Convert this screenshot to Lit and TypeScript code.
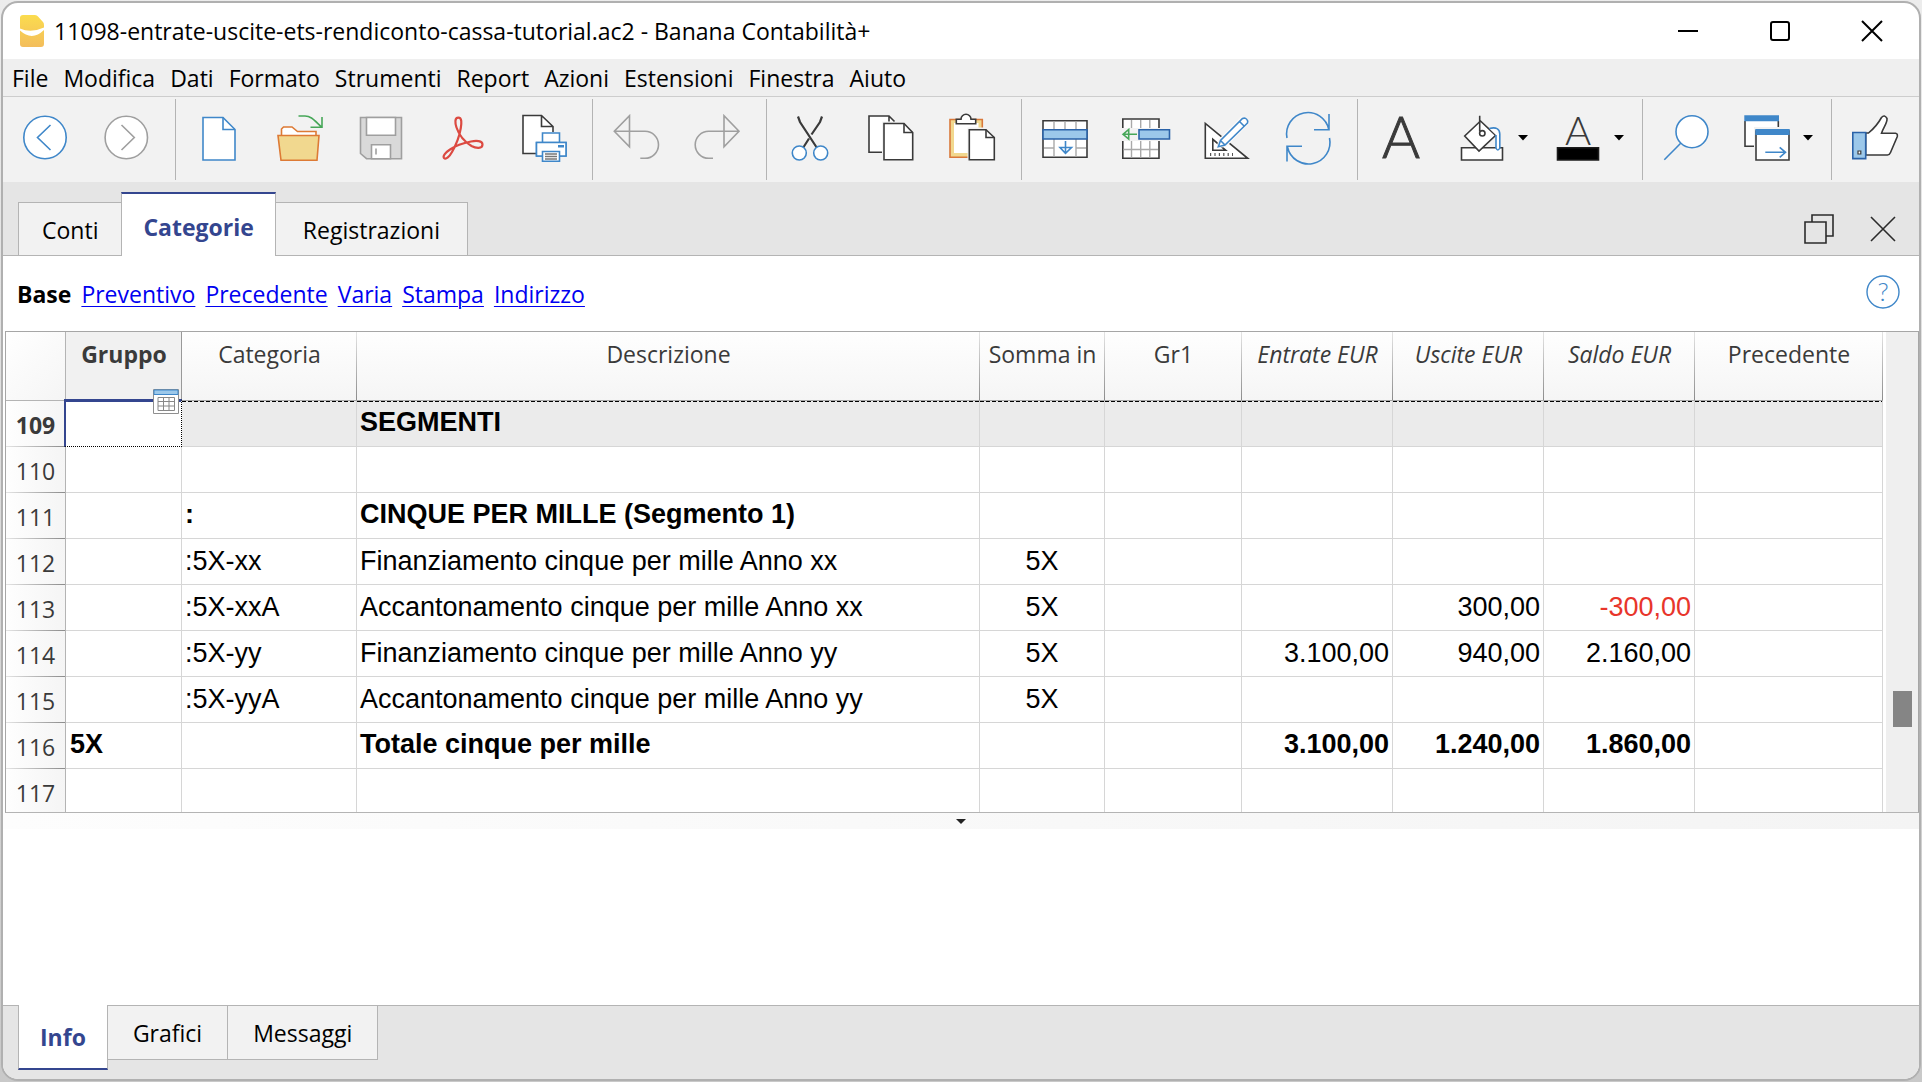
import { LitElement, html, svg, css, nothing, TemplateResult } from "lit";
import { customElement, property, state } from "lit/decorators.js";
import { classMap } from "lit/directives/class-map.js";

const BLUE = "#3f87c9";
const DEEP = "#2a62a8";
const SKY = "#9cc8ea";
const INK = "#3a3a3a";
const GREY = "#9f9f9f";
const GREEN = "#46a758";

const icons: Record<string, TemplateResult> = {
  back: svg`<circle cx="24" cy="23.5" r="21.2" fill="#fff" stroke=${BLUE}/>
    <path d="M29.5 11 16.5 23.5 29.5 36" stroke=${BLUE}/>`,
  forward: svg`<circle cx="24.3" cy="23.5" r="21.2" fill="#fff" stroke=${GREY}/>
    <path d="M19.5 11 32.3 23.5 19.5 36" stroke=${GREY}/>`,
  newFile: svg`<path d="M8 3.5H28L40 15.5V46H8Z" fill="#fff" stroke=${BLUE}/>
    <path d="M28 3.5V15.5H40" stroke=${BLUE}/>`,
  open: svg`<path d="M5.5 22V15L7.5 13H16L21.5 17.5H40V22" fill="#fff" stroke="#dd7a35"/>
    <path d="M2 21.5H43L41 46.3H5Z" fill="#f1d88f" stroke="#dd7a35"/>
    <path d="M22.5 2H29C35 2 38 6 45.5 13M34.5 13.2H46V3" stroke=${GREEN}/>`,
  save: svg`<path d="M3.5 3.5H44.5V44.7H9.5L3.5 39.5Z" fill="#d9d9d9" stroke=${GREY}/>
    <path d="M9.5 3.5H38.5V21.3H9.5ZM14.5 44.7V30.7H33.5V44.7Z" fill="#fff" stroke=${GREY}/>
    <path d="M19 34.5V40.5" stroke=${GREY}/>`,
  pdf: svg`<path d="M20.4 3.7C16.5 3.7 17 9 18.500 13.500C21 21 27 28 33.500 32C38 34.500 44.500 35 44.500 30.500C44.500 26.500 38 26.500 33 27.500C25 29 17 32 12 35.500C7.500 38.500 4.500 42 6 44C8 46 11.500 42.500 14 38C18 31 21.500 22 22.800 14C23.600 9 24 3.700 20.400 3.700Z" stroke="#dc4a41" stroke-width="2.2"/>`,
  print: svg`<path d="M4 1.5H22.500L34 12.500V28H22V39.500H4Z" fill="#fff"/>
    <path d="M34 18V12.500L22.500 1.500H4V39.500H17M22.500 1.500V12.500H34" stroke=${INK}/>
    <path d="M23.500 28.500V19H40.500V28.500M23.500 42H17.500V28.500H47V42H40.500" fill="#fff" stroke=${BLUE}/>
    <path d="M17.500 28.500H47V42H17.500Z" fill="#fff" stroke=${BLUE}/>
    <path d="M39 31H45V33.500H39Z" fill=${BLUE}/>
    <path d="M23.500 37.500H40.500V47.300H23.500Z" fill="#fff" stroke=${BLUE}/>
    <path d="M26 40H38M26 42.500H38M26 45H38" stroke="#777"/>`,
  undo: svg`<path d="M17.500 1.800V32.800L2.300 17.300ZM2.300 17.300H33A13.500 13.500 0 0 1 33 44.300H28.300" stroke=${GREY}/>`,
  redo: svg`<path d="M31 1.800V32.800L46 17.300ZM46 17.300H15.700A13.500 13.500 0 0 0 15.700 44.300H20" stroke=${GREY}/>`,
  cut: svg`<path d="M12 2.500 14 8 30.700 33.500M36 2.500 34 8 25.500 20.500M23 24.500 17.300 33.500" stroke=${INK} stroke-width="2.200"/>
    <circle cx="13.300" cy="39" r="7" fill="#fff" stroke=${BLUE}/>
    <circle cx="34.700" cy="39" r="7" fill="#fff" stroke=${BLUE}/>`,
  copy: svg`<path d="M2 2H22L27 7.500H15V38.300H2Z" fill="#fff"/>
    <path d="M15 38.300H2V2H22L27.500 7.500M22 2V7.500" stroke=${INK}/>
    <path d="M17 9.500H37L45.700 18.500V45.700H17Z" fill="#fff" stroke=${INK}/>
    <path d="M37 9.500V18.500H45.700" stroke=${INK}/>`,
  paste: svg`<path d="M2 5.500H34.300V43.300H2Z" fill="#f1d88f" stroke="#d9783a"/>
    <path d="M6 9H30.500V39H6Z" fill="#fff"/>
    <path d="M19.500 13.500H48V47H19.500Z" fill="#f2f2f2"/>
    <path d="M8.300 9.700V5.300H13A5 5 0 0 1 23 5.300H27.700V9.700Z" fill="#fff" stroke=${INK}/>
    <path d="M21.300 15.700H38L46.300 23.500V45.700H21.300Z" fill="#fff" stroke=${INK}/>
    <path d="M38 15.700V23.500H46.300" stroke=${INK}/>`,
  insertRows: svg`<path d="M2 6.700H46V43.300H2Z" fill="#fff" stroke=${INK}/>
    <path d="M13 7.500V15M24 7.500V15M35 7.500V15M13 25V42.500M35 25V42.500M3 34H13M35 34H45" stroke="#a9a9a9" stroke-width="1.400"/>
    <path d="M2 15.700H46V25H2Z" fill=${SKY} stroke=${DEEP}/>
    <path d="M24.500 27V33.500M19 33.500H30.500L24.500 39.300ZM24.500 33V38.500" stroke=${BLUE}/>`,
  addColumns: svg`<path d="M.800 5H37V44.300H.800Z" fill="#fff" stroke=${INK}/>
    <path d="M9.500 6V14M18.700 6V14M27.800 6V14M9.500 27V43.500M18.700 27V43.500M27.800 27V43.500M1.500 35.500H36" stroke="#a9a9a9" stroke-width="1.400"/>
    <path d="M-1 14H39V27H-1Z" fill="#f2f2f2"/>
    <path d="M17 15.700H47.500V25H17Z" fill=${SKY} stroke=${DEEP}/>
    <path d="M1 20.300 6.700 15.500V25ZM1 20.300H15" stroke=${GREEN}/>`,
  design: svg`<path d="M2.300 9.500V44.300H44.700Z" fill="#fff" stroke=${INK}/>
    <path d="M9.800 25.300V36.300H22.700Z" stroke=${INK}/>
    <path d="M7 40.500H30" stroke="#555" stroke-width="3" stroke-dasharray="1.200 3.200"/>
    <path d="M13.500 34 15.500 25.500 39 1.500 47 9 23 33Z" fill="#f7f7f7"/>
    <path d="M15.300 32.700 17.500 26.500 39.500 4.500Q43 3 44.700 7L44.500 9 22 31ZM17.500 26.500 22 31M36.500 7.500 41.300 12.200" fill="#fff" stroke=${BLUE}/>`,
  refresh: svg`<path d="M3 24A21.300 21.300 0 0 1 44.800 15.700M45 0V15.700H30M45.500 24A21.300 21.300 0 0 1 3.500 33M3 47.500V32.300H18" stroke=${BLUE}/>`,
  font: svg`<text class="letter regular" x="24" y="44">A</text>`,
  fill: svg`<path d="M3.500 33.700H44.500V46H3.500Z" fill="#fff" stroke=${INK}/>
    <path d="M22.500 7 6.700 22 21 37 37.700 21.300Z" fill="#fff" stroke=${INK}/>
    <path d="M21.700 1.700V17.500" stroke=${INK}/>
    <circle cx="24.300" cy="19.300" r="2.700" fill="#fff" stroke=${INK}/>
    <path d="M31.300 14.500Q41.500 12 41.800 20V34Q39.800 38 38 34V21" stroke=${BLUE} fill="#fff"/>`,
  textColor: svg`<text class="letter thin" x="24" y="31">A</text>
    <path d="M3.500 33.700H44.500V46H3.500Z" fill="#000" stroke="#1c1c1c"/>`,
  search: svg`<circle cx="30" cy="17.700" r="16" fill="#fff" stroke=${BLUE}/>
    <path d="M18.700 29.300 2.300 45.700" stroke=${BLUE}/>`,
  windows: svg`<path d="M2 4H35.300V13H11V32.300H2Z" fill="#fff"/>
    <path d="M35.300 7V13M2 7V32.300H11" stroke=${INK}/>
    <path d="M1.300 1.300H36V7.300H1.300Z" fill=${BLUE}/>
    <path d="M13 17H46V46H13Z" fill="#fff" stroke=${INK}/>
    <path d="M12.300 15H46.700V21H12.300Z" fill=${BLUE}/>
    <path d="M22.300 38.300H42.500M36.700 33.300 42.500 38.300 36.700 43.300" stroke=${BLUE}/>`,
  like: svg`<path d="M14.700 19H17.500C23 14.500 27.500 9 30.500 3.500Q33.500 0 36 4.500C36.500 9 32.500 13 30.500 19.300H44.500Q46.800 19.500 46.300 22.500L39.500 38.500Q38.500 41 36.500 41H14.700Z" fill="#fff" stroke=${INK}/>
    <path d="M1.800 18.500H14.700V44.600H1.800Z" fill=${SKY} stroke=${DEEP}/>
    <path d="M7 37H9.800V40H7Z" fill="#fff" stroke=${INK} stroke-width="1.200"/>`,
};

interface Tool { icon: string; label: string; menu?: boolean; }

const toolGroups: Tool[][] = [
  [{ icon: "back", label: "Indietro" }, { icon: "forward", label: "Avanti" }],
  [
    { icon: "newFile", label: "Nuovo" },
    { icon: "open", label: "Apri" },
    { icon: "save", label: "Salva" },
    { icon: "pdf", label: "Crea PDF" },
    { icon: "print", label: "Stampa" },
  ],
  [{ icon: "undo", label: "Annulla" }, { icon: "redo", label: "Ripristina" }],
  [
    { icon: "cut", label: "Taglia" },
    { icon: "copy", label: "Copia" },
    { icon: "paste", label: "Incolla" },
  ],
  [
    { icon: "insertRows", label: "Inserisci righe" },
    { icon: "addColumns", label: "Aggiungi righe" },
    { icon: "design", label: "Imposta colonne" },
    { icon: "refresh", label: "Ricalcola" },
  ],
  [
    { icon: "font", label: "Carattere" },
    { icon: "fill", label: "Colore sfondo", menu: true },
    { icon: "textColor", label: "Colore testo", menu: true },
  ],
  [
    { icon: "search", label: "Cerca" },
    { icon: "windows", label: "Finestre", menu: true },
  ],
  [{ icon: "like", label: "Valuta" }],
];

interface Row {
  n: number; group?: string; cat?: string; desc?: string; sum?: string;
  inc?: string; out?: string; bal?: string; bold?: boolean;
}

const rows: Row[] = [
  { n: 109, desc: "SEGMENTI", bold: true },
  { n: 110 },
  { n: 111, cat: ":", desc: "CINQUE PER MILLE (Segmento 1)", bold: true },
  { n: 112, cat: ":5X-xx", desc: "Finanziamento cinque per mille Anno xx", sum: "5X" },
  { n: 113, cat: ":5X-xxA", desc: "Accantonamento cinque per mille Anno xx", sum: "5X", out: "300,00", bal: "-300,00" },
  { n: 114, cat: ":5X-yy", desc: "Finanziamento cinque per mille Anno yy", sum: "5X", inc: "3.100,00", out: "940,00", bal: "2.160,00" },
  { n: 115, cat: ":5X-yyA", desc: "Accantonamento cinque per mille Anno yy", sum: "5X" },
  { n: 116, group: "5X", desc: "Totale cinque per mille", inc: "3.100,00", out: "1.240,00", bal: "1.860,00", bold: true },
  { n: 117 },
];

@customElement("tool-bar")
class ToolBar extends LitElement {
  static styles = css`
    :host { display: block; background: #f2f2f2; }
    .bar { display: flex; height: 85px; padding-left: 2px; box-sizing: border-box; }
    .group { display: flex; align-items: flex-start; padding-right: 8px; margin: 2px 0; }
    .group + .group { padding-left: 3px; border-left: 1px solid #b4b4b4; }
    button {
      display: flex; align-items: center; width: 81px; height: 78px;
      padding: 0 0 0 16px; border: 0; background: none; gap: 12px;
    }
    button.wide { width: 96px; }
    svg.icon {
      width: 48px; height: 48px; flex: none; overflow: visible;
      fill: none; stroke-width: 1.6;
    }
    .arrow { width: 10px; height: 6px; flex: none; }
    .letter { text-anchor: middle; fill: #3a3a3a; font-family: Lato, sans-serif; font-weight: 300; }
    .regular { font-size: 58px; stroke: #3a3a3a; stroke-width: 1; }
    .thin { font-size: 40px; }
  `;

  render() {
    return html`<div class="bar" role="toolbar" aria-label="Strumenti">
      ${toolGroups.map(group => html`<div class="group">
        ${group.map(t => html`<button class=${classMap({ wide: !!t.menu })} aria-label=${t.label}>
          <svg class="icon" viewBox="0 0 48 48" aria-hidden="true">${icons[t.icon]}</svg>
          ${t.menu ? html`<svg class="arrow" viewBox="0 0 10 6" aria-hidden="true"><path d="M0 0H10L5 5.500Z"/></svg>` : nothing}
        </button>`)}
      </div>`)}
    </div>`;
  }
}

@customElement("accounts-table")
class AccountsTable extends LitElement {
  static styles = css`
    :host { display: flex; border: 1px solid #a6a6a6; border-bottom-color: #b4b4b4; margin: 0 0 0 2px; background: #fff; }
    table { flex: 1; min-width: 0; border-collapse: separate; border-spacing: 0; table-layout: fixed; }
    .c-num { width: 60px; } .c-group { width: 116px; } .c-cat { width: 175px; }
    .c-sum { width: 125px; } .c-gr { width: 137px; } .c-money { width: 151px; } .c-prev { width: 188px; }
    th, td { box-sizing: border-box; padding: 0; overflow: hidden; white-space: nowrap; }
    thead th {
      height: 69px; padding-top: 6px; vertical-align: top;
      font: 400 23px/32px "Open Sans", "Noto Sans", sans-serif; color: #3a3a3a;
      border-bottom: 1px solid #a6a6a6;
      background:
        linear-gradient(#e4e4e4, #8c8c8c) right / 1px 100% no-repeat,
        linear-gradient(#fefefe, #f5f5f5);
    }
    thead th.current { background: linear-gradient(#999, #999) right / 1px 100% no-repeat, #f1f1f1; font-weight: 700; }
    thead td { background: linear-gradient(135deg, #fff, #f5f5f5); border-right: 1px solid #b4b4b4; border-bottom: 1px solid #b4b4b4; }
    thead th.calc { font-style: italic; }
    tbody td, tbody th { height: 46px; border-right: 1px solid #d6d6d6; }
    tbody td { border-bottom: 1px solid #d6d6d6; font: 400 27px/31px "Liberation Sans", Arial, sans-serif; color: #000; padding: 0 3px; }
    tbody th {
      font: 400 23px/32px "Open Sans", "Noto Sans", sans-serif; color: #3a3a3a; padding-top: 2px;
      border-right-color: #b4b4b4;
      background:
        linear-gradient(90deg, #e4e4e4, #8c8c8c) bottom / 100% 1px no-repeat,
        linear-gradient(90deg, #fefefe, #f5f5f5);
    }
    tr.selected th { font-weight: 700; background-color: #f1f1f1; }
    tr.selected td {
      background: repeating-linear-gradient(90deg, #000 0 4px, #ebebeb 4px 6px) top / 100% 1px no-repeat, #ebebeb;
    }
    tr.bold td { font-weight: 700; padding-bottom: 2px; }
    tbody tr:last-child td, tbody tr:last-child th { height: 43px; border-bottom: 0; }
    tbody tr:last-child th { padding-top: 4px; background: linear-gradient(90deg, #fefefe, #f5f5f5); }
    tbody td.group { padding-left: 4px; }
    td.center { text-align: center; }
    tbody td.num { text-align: right; }
    td.neg { color: #e8352b; }
    tbody td.active { position: relative; overflow: visible; padding: 0; background: #fff; }
    .editor {
      position: absolute; inset: -2px 0 0 -2px; box-sizing: border-box; width: 118px; height: 48px;
      border: 1px dotted #000; border-left: 2px solid #34468f; border-top: 3px solid #34468f;
      border-radius: 0; background: #fff; padding: 0 4px; font: inherit; outline: 0;
    }
    .picker { position: absolute; right: 2px; top: -12px; width: 26px; height: 25px; padding: 0; border: 0; background: none; display: flex; }
    .track { width: 32px; margin-left: 3px; background: #efefef; display: flex; flex-direction: column; align-items: center; }
    .before { flex: 359; } .after { flex: 85; }
    .thumb { width: 19px; height: 36px; background: #858585; }
  `;

  private cell(row: Row) {
    const money = (v?: string) =>
      html`<td class=${classMap({ num: true, neg: !!v && v.startsWith("-") })}>${v}</td>`;
    return html`
      ${row.n === 109
        ? html`<td class="active">
            <input class="editor" aria-label="Gruppo">
            <button class="picker" aria-label="Elenco">
              <svg width="26" height="25" viewBox="0 0 26 25" aria-hidden="true">
                <path d="M.500.500H25.500V24.500H.500Z" fill="#fff" stroke="#8f8f8f"/>
                <path d="M1 1H25V5.500H1Z" fill=${SKY} stroke=${BLUE}/>
                <path d="M5 8.500H21.500V21.500H5ZM5 12.500H21M5 17H21M10.500 8V21.500M16 8V21.500" fill="none" stroke="#888"/>
              </svg>
            </button>
          </td>`
        : html`<td class="group">${row.group}</td>`}
      <td>${row.cat}</td>
      <td>${row.desc}</td>
      <td class="center">${row.sum}</td>
      <td></td>
      ${money(row.inc)}${money(row.out)}${money(row.bal)}
      <td></td>`;
  }

  render() {
    return html`<table>
      <colgroup>
        <col class="c-num"><col class="c-group"><col class="c-cat"><col><col class="c-sum"><col class="c-gr">
        <col class="c-money"><col class="c-money"><col class="c-money"><col class="c-prev">
      </colgroup>
      <thead><tr>
        <td></td>
        <th class="current" scope="col">Gruppo</th>
        <th scope="col">Categoria</th>
        <th scope="col">Descrizione</th>
        <th scope="col">Somma in</th>
        <th scope="col">Gr1</th>
        <th class="calc" scope="col">Entrate EUR</th>
        <th class="calc" scope="col">Uscite EUR</th>
        <th class="calc" scope="col">Saldo EUR</th>
        <th scope="col">Precedente</th>
      </tr></thead>
      <tbody>
        ${rows.map(r => html`<tr class=${classMap({ selected: r.n === 109, bold: !!r.bold })}>
          <th scope="row">${r.n}</th>${this.cell(r)}
        </tr>`)}
      </tbody>
    </table>
    <div class="track"><div class="before"></div><div class="thumb"></div><div class="after"></div></div>`;
  }
}

@customElement("tab-strip")
class TabStrip extends LitElement {
  @property({ type: Array }) tabs: string[] = [];
  @property() selected = "";
  @property({ type: Boolean, reflect: true }) bottom = false;

  static styles = css`
    :host { display: flex; align-items: flex-end; }
    :host([bottom]) { align-items: flex-start; }
    button {
      box-sizing: border-box; height: 53px; padding: 1px 27px 0; margin: 0 0 0 -1px;
      border: 1px solid #b4b4b4; border-bottom: 0; background: #f2f2f2; color: #000;
      font: 400 23px/32px "Open Sans", "Noto Sans", sans-serif;
    }
    button:first-child { padding-left: 23px; padding-right: 23px; margin-left: 0; }
    button.on {
      height: 64px; padding: 4px 21px 0; margin-bottom: -1px; background: #fff; color: #34468f;
      font-weight: 700; border-top: 2px solid #34468f;
    }
    :host([bottom]) button { height: 54px; border: 1px solid #b4b4b4; border-top: 0; padding: 0 25px; }
    :host([bottom]) button.on { height: 65px; margin: -1px 0 0; padding: 0 21px; border-bottom: 2px solid #34468f; }
  `;

  render() {
    return this.tabs.map(t => html`<button role="tab" aria-selected=${t === this.selected}
      class=${classMap({ on: t === this.selected })}
      @click=${() => { this.selected = t; }}>${t}</button>`);
  }
}

@customElement("app-root")
class AppRoot extends LitElement {
  @state() private view = "Base";

  static styles = css`
    :host {
      display: block; box-sizing: border-box; height: 100vh; padding: 1px;
      background: linear-gradient(#ececec, #c9c9c9); color: #000;
      font: 400 23px/32px "Open Sans", "Noto Sans", sans-serif;
    }
    .window {
      display: flex; flex-direction: column; box-sizing: border-box; height: 100%;
      border: 2px solid #b0b0b0; border-radius: 17px; overflow: hidden; background: #fff;
    }
    button { font: inherit; color: inherit; border: 0; background: none; padding: 0; }
    svg { display: block; fill: none; overflow: visible; }
    .title { display: flex; align-items: center; height: 56px; padding: 0 1px 0 17px; }
    .title h1 { flex: 1; margin: 0 0 0 10px; font: inherit; }
    .controls { display: flex; }
    .controls button { display: grid; place-items: center; width: 92px; height: 54px; }
    .controls svg { stroke: #000; stroke-width: 2; }
    .menu { display: flex; gap: 15px; height: 36px; padding-top: 1px; align-items: center; padding-left: 9px; background: #efefef; border-bottom: 1px solid #cdcdcd; }
    .tabs { display: flex; justify-content: space-between; height: 73px; padding: 0 24px 0 15px; background: #e5e5e5; border-bottom: 1px solid #b4b4b4; }
    .doc { display: flex; align-items: center; gap: 37px; padding-top: 21px; height: 52px; }
    .doc button { height: 30px; display: grid; place-items: center; }
    .doc svg { stroke: #2b2b2b; stroke-width: 1.6; }
    .views { display: flex; align-items: center; justify-content: space-between; height: 75px; padding: 0 19px 0 14px; }
    .views nav { display: flex; gap: 10px; }
    .views a { color: #0000f0; text-decoration-thickness: 1px; text-underline-offset: 3px; }
    .views a[aria-current] { color: #000; font-weight: 700; text-decoration: none; }
    .help { margin-bottom: 4px; }
    .help text { font: 300 26px Lato, sans-serif; fill: #3f87c9; text-anchor: middle; }
    .splitter { height: 16px; display: grid; place-items: center; background: linear-gradient(100deg, #fdfdfd, #f4f4f4); }
    .info { flex: 1; background: #fff; }
    .foot { height: 73px; background: #e5e5e5; border-top: 1px solid #b4b4b4; padding-left: 15px; }
  `;

  render() {
    const menus = ["File", "Modifica", "Dati", "Formato", "Strumenti", "Report", "Azioni", "Estensioni", "Finestra", "Aiuto"];
    const views = ["Base", "Preventivo", "Precedente", "Varia", "Stampa", "Indirizzo"];
    return html`<div class="window">
      <header class="title">
        <svg width="24" height="32" viewBox="0 0 24 32" aria-hidden="true">
          <defs><linearGradient id="banana" x1="0" y1="0" x2="0" y2="1">
            <stop offset="0" stop-color="#fbdc4e"/><stop offset="1" stop-color="#f3bd5c"/>
          </linearGradient></defs>
          <path d="M3 0H15Q17 0 18 1.500L23 7Q24 8 24 10V29Q24 32 21 32H3Q0 32 0 29V3Q0 0 3 0Z" fill="url(#banana)"/>
          <path d="M0 13.500Q11 18.500 24 12.500V15Q12 26.500 0 15.500Z" fill="#fff"/>
        </svg>
        <h1>11098-entrate-uscite-ets-rendiconto-cassa-tutorial.ac2 - Banana Contabilità+</h1>
        <div class="controls">
          <button aria-label="Riduci"><svg width="20" height="20"><path d="M0 10H20"/></svg></button>
          <button aria-label="Ingrandisci"><svg width="20" height="20"><rect x="1" y="1" width="18" height="18" rx="2"/></svg></button>
          <button aria-label="Chiudi"><svg width="20" height="20"><path d="M0 0 20 20M20 0 0 20"/></svg></button>
        </div>
      </header>
      <nav class="menu">${menus.map(m => html`<button>${m}</button>`)}</nav>
      <tool-bar></tool-bar>
      <div class="tabs">
        <tab-strip .tabs=${["Conti", "Categorie", "Registrazioni"]} .selected=${"Categorie"}></tab-strip>
        <div class="doc">
          <button aria-label="Ripristina finestra"><svg width="30" height="30"><path d="M8 8V1H29V22H22M1 8H22V29H1Z"/></svg></button>
          <button aria-label="Chiudi documento"><svg width="24" height="24"><path d="M0 0 24 24M24 0 0 24"/></svg></button>
        </div>
      </div>
      <div class="views">
        <nav>${views.map(v => html`<a href="#${v.toLowerCase()}" aria-current=${v === this.view ? "page" : nothing}
          @click=${() => { this.view = v; }}>${v}</a>`)}</nav>
        <button class="help" aria-label="Aiuto">
          <svg width="34" height="34"><circle cx="17" cy="17" r="16" stroke=${BLUE} stroke-width="1.400"/><text x="17" y="26">?</text></svg>
        </button>
      </div>
      <accounts-table></accounts-table>
      <div class="splitter"><svg width="10" height="5"><path d="M0 0H10L5 5Z" fill="#222"/></svg></div>
      <main class="info"></main>
      <footer class="foot">
        <tab-strip bottom .tabs=${["Info", "Grafici", "Messaggi"]} .selected=${"Info"}></tab-strip>
      </footer>
    </div>`;
  }
}
